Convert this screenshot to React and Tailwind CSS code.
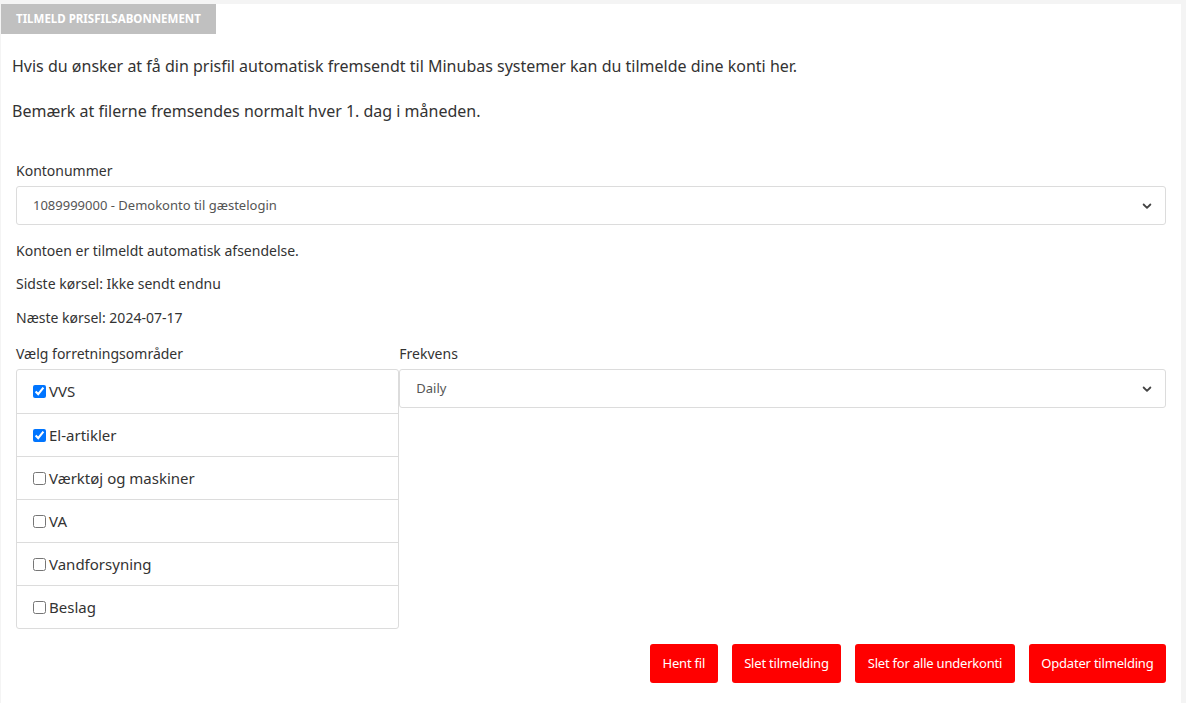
import React, { useState } from 'react';

const areas = [
  { label: 'VVS', checked: true },
  { label: 'El-artikler', checked: true },
  { label: 'Værktøj og maskiner', checked: false },
  { label: 'VA', checked: false },
  { label: 'Vandforsyning', checked: false },
  { label: 'Beslag', checked: false },
];

function Chevron() {
  return (
    <svg className="w-3 h-3 text-[#444]" viewBox="0 0 16 16" fill="none">
      <path d="M3.5 6l4.5 4.5 4.5-4.5" stroke="currentColor" strokeWidth="2.4" strokeLinecap="round" strokeLinejoin="round" />
    </svg>
  );
}

function SelectBox({ value }) {
  return (
    <div className="flex h-[39px] items-center justify-between rounded-[3px] border border-[#dcdcdc] bg-white pl-4 pr-3 text-[13px] text-[#555]">
      <span>{value}</span>
      <Chevron />
    </div>
  );
}

export default function App() {
  const [checked, setChecked] = useState(areas.map((a) => a.checked));

  return (
    <div className="min-h-[703px] bg-[#f4f4f4] pl-[1px] pr-[5px] pt-1 text-[#333]" style={{ fontFamily: '"Noto Sans", "Open Sans", sans-serif' }}>
      <div className="min-h-[699px] bg-white">
        {/* Tab header */}
        <div className="inline-flex h-[30px] w-[215px] items-center bg-[#c0c0c0] px-[15px] text-[11.5px] font-bold uppercase text-white">
          Tilmeld prisfilsabonnement
        </div>

        <div className="px-[11px] pt-[17px] text-[16px] leading-[30px]">
          <p>Hvis du ønsker at få din prisfil automatisk fremsendt til Minubas systemer kan du tilmelde dine konti her.</p>
          <p className="mt-[15px]">Bemærk at filerne fremsendes normalt hver 1. dag i måneden.</p>
        </div>

        <div className="px-[15px] pt-[35px] text-[14px]">
          <label className="block leading-[20px]">Kontonummer</label>
          <div className="mt-[5px]">
            <SelectBox value="1089999000 - Demokonto til gæstelogin" />
          </div>

          <p className="mt-[16px] leading-[20px]">Kontoen er tilmeldt automatisk afsendelse.</p>
          <p className="mt-[13px] leading-[20px]">Sidste kørsel: Ikke sendt endnu</p>
          <p className="mt-[14px] leading-[20px]">Næste kørsel: 2024-07-17</p>

          <div className="mt-[16px] grid grid-cols-3">
            <div>
              <label className="block leading-[20px]">Vælg forretningsområder</label>
              <ul className="mt-[5px] rounded-[3px] border border-[#dcdcdc] bg-white">
                {areas.map((a, i) => (
                  <li key={a.label} className="flex h-[43px] items-center border-t border-[#dcdcdc] pl-[16px] pr-4 text-[15px] first:border-t-0">
                    <input
                      type="checkbox"
                      checked={checked[i]}
                      onChange={() => setChecked((c) => c.map((v, j) => (j === i ? !v : v)))}
                      className="m-0 mr-[3px] h-[13px] w-[13px] accent-[#0075ff]"
                    />
                    <span>{a.label}</span>
                  </li>
                ))}
              </ul>
            </div>
            <div className="col-span-2">
              <label className="block leading-[20px]">Frekvens</label>
              <div className="mt-[5px]">
                <SelectBox value="Daily" />
              </div>
            </div>
          </div>

          {/* Actions */}
          <div className="mt-[15px] flex justify-end gap-[14px]">
            {['Hent fil', 'Slet tilmelding', 'Slet for alle underkonti', 'Opdater tilmelding'].map((b) => (
              <button key={b} className="h-[39px] rounded-[3px] bg-[#ff0000] px-[12.5px] text-[13px] tracking-[-0.2px] text-white">
                {b}
              </button>
            ))}
          </div>
        </div>
      </div>
    </div>
  );
}
